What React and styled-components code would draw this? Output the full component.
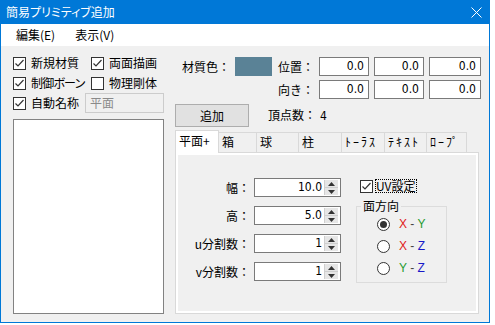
import React from 'react';
import styled, { createGlobalStyle } from 'styled-components';

const GlobalStyle = createGlobalStyle`
  html, body {
    margin: 0;
    padding: 0;
    background: #fff;
  }
  body {
    font-family: "Noto Sans CJK JP", "Noto Sans", sans-serif;
    font-size: 12px;
    color: #000;
  }
`;

const NUM_FONT = `"Liberation Sans Narrow", "DejaVu Sans Condensed", "Liberation Sans", sans-serif`;

const Window = styled.div`
  width: 490px;
  height: 323px;
  box-sizing: border-box;
  border: 1px solid #0078d7;
  border-top: none;
  background: #f0f0f0;
  display: flex;
  flex-direction: column;
`;

const TitleBar = styled.div`
  height: 24px;
  flex: none;
  background: #0078d7;
  color: #fff;
  display: flex;
  align-items: center;
  justify-content: space-between;
  padding: 0 7px 0 5px;
  line-height: 16px;
  font-feature-settings: "palt";
`;

const MenuBar = styled.div`
  height: 22px;
  flex: none;
  background: #fff;
  display: flex;
  align-items: center;
  padding-left: 5px;
`;

const MenuItem = styled.span`
  padding: 0 10px;
  line-height: 16px;
`;

const Body = styled.div`
  flex: 1;
  display: flex;
  gap: 11px;
  padding: 7px 0 0 12px;
`;

const LeftCol = styled.div`
  width: 151px;
  display: flex;
  flex-direction: column;
`;

const CheckGrid = styled.div`
  display: grid;
  grid-template-columns: 78px auto;
  grid-auto-rows: 20px;
  align-items: center;
`;

const CheckItem = styled.label`
  display: flex;
  align-items: center;
  gap: 5px;
  line-height: 16px;
  white-space: nowrap;
  font-feature-settings: "palt";
  letter-spacing: ${({ tight }) => (tight ? '-0.8px' : '0')};
`;

const NameRow = styled.div`
  height: 20px;
  display: flex;
  align-items: center;
  justify-content: space-between;
`;

const NameInput = styled.div`
  width: 79px;
  height: 20px;
  box-sizing: border-box;
  border: 1px solid #cccccc;
  background: #f0f0f0;
  color: #8a8a8a;
  padding-left: 4px;
  line-height: 17px;
`;

const ListBox = styled.div`
  margin-top: 6px;
  height: 195px;
  box-sizing: border-box;
  border: 1px solid #828282;
  background: #fff;
`;

const RightCol = styled.div`
  width: 305px;
  display: flex;
  flex-direction: column;
  padding-top: 4px;
`;

const TopGrid = styled.div`
  display: grid;
  grid-template-columns: 55px 37px 37px 50px 50px 52px;
  grid-auto-rows: 19px;
  column-gap: 5px;
  row-gap: 4px;
  align-items: center;
`;

const Label = styled.span`
  text-align: right;
  white-space: nowrap;
  line-height: 16px;
  grid-column: ${({ col }) => col || 'auto'};
`;

const Swatch = styled.div`
  height: 19px;
  background: #5a8296;
`;

const Field = styled.div`
  height: 19px;
  box-sizing: border-box;
  border: 1px solid #7a7a7a;
  background: #fff;
  text-align: right;
  padding-right: 4px;
  font-family: ${NUM_FONT};
  line-height: 17px;
`;

const ActionRow = styled.div`
  margin-top: 5px;
  display: flex;
  align-items: center;
  gap: 19px;
`;

const Button = styled.div`
  width: 74px;
  height: 23px;
  box-sizing: border-box;
  border: 1px solid #adadad;
  background: #e1e1e1;
  display: flex;
  align-items: center;
  justify-content: center;
`;

const Count = styled.span`
  line-height: 16px;
  b {
    font-weight: normal;
    font-family: ${NUM_FONT};
    margin-left: 4px;
  }
`;

const TabList = styled.div`
  margin-top: 3px;
  height: 22px;
  display: flex;
  align-items: flex-end;
`;

const Tab = styled.div`
  width: ${({ w }) => w}px;
  height: ${({ active }) => (active ? 23 : 20)}px;
  margin-bottom: ${({ active }) => (active ? -1 : 0)}px;
  box-sizing: border-box;
  border: 1px solid #d9d9d9;
  border-bottom: none;
  border-left-width: ${({ first }) => (first ? 1 : 0)}px;
  background: ${({ active }) => (active ? '#fff' : '#f0f0f0')};
  position: relative;
  z-index: ${({ active }) => (active ? 1 : 0)};
  padding-left: 3px;
  line-height: ${({ active }) => (active ? 19 : 17)}px;
  letter-spacing: ${({ kana }) => (kana ? '2px' : '0')};
  white-space: nowrap;
`;

const Panel = styled.div`
  width: 304px;
  height: 162px;
  box-sizing: border-box;
  border: 1px solid #d9d9d9;
  background: #fff;
  padding: 2px;
`;

const TabPage = styled.div`
  height: 100%;
  background: #f0f0f0;
  display: flex;
  align-items: flex-start;
  padding-top: 23px;
  box-sizing: border-box;
`;

const FormGrid = styled.div`
  display: grid;
  grid-template-columns: 72px 87px;
  grid-auto-rows: 19px;
  column-gap: 4px;
  row-gap: 9px;
  align-items: center;
`;

const SpinBox = styled.div`
  height: 19px;
  box-sizing: border-box;
  border: 1px solid #7a7a7a;
  background: #fff;
  display: flex;
`;

const SpinValue = styled.span`
  flex: 1;
  text-align: right;
  padding-right: 2px;
  font-family: ${NUM_FONT};
  line-height: 17px;
`;

const SpinButtons = styled.div`
  width: 13px;
  margin: 1px 2px 1px 0;
  display: flex;
  flex-direction: column;
  border-left: 1px solid #cfcfcf;
`;

const SpinHalf = styled.div`
  flex: 1;
  background: #e6e6e6;
  display: flex;
  align-items: center;
  justify-content: center;
  & + & {
    border-top: 1px solid #cfcfcf;
  }
`;

const UvCol = styled.div`
  margin-left: 15px;
  width: 91px;
  display: flex;
  flex-direction: column;
`;

const UvRow = styled.label`
  height: 14px;
  margin-top: 1px;
  padding-left: 4px;
  display: flex;
  align-items: center;
  gap: 2px;
  line-height: 14px;
`;

const FocusText = styled.span`
  outline: 1px dotted #000;
  outline-offset: -1px;
  padding: 0 1px;
`;

const Group = styled.fieldset`
  margin: 6px 0 0;
  padding: 0 0 3px 20px;
  border: 1px solid #dcdcdc;
  min-width: 0;
`;

const Legend = styled.legend`
  padding: 0 2px;
  margin-left: -16px;
  line-height: 14px;
  font-size: 12px;
`;

const RadioRow = styled.label`
  height: 22px;
  display: flex;
  align-items: center;
  gap: 9px;
`;

const Axes = styled.span`
  font-family: "Liberation Sans", sans-serif;
  font-size: 12px;
  color: #444;
  white-space: pre;
`;

const Axis = styled.span`
  color: ${({ c }) => ({ X: '#e0201a', Y: '#1f9a2e', Z: '#1818c8' }[c])};
`;

const CheckBox = ({ checked }) => (
  <svg width="13" height="13" viewBox="0 0 13 13" style={{ flex: 'none' }}>
    <rect x="0.5" y="0.5" width="12" height="12" fill="#fff" stroke="#333" />
    {checked && (
      <polyline points="2.5,6.5 5,9 10.5,3" fill="none" stroke="#333" strokeWidth="1.2" />
    )}
  </svg>
);

const Radio = ({ checked }) => (
  <svg width="13" height="13" viewBox="0 0 13 13" style={{ flex: 'none' }}>
    <circle cx="6.5" cy="6.5" r="6" fill="#fff" stroke="#333" />
    {checked && <circle cx="6.5" cy="6.5" r="3.5" fill="#333" />}
  </svg>
);

const Spin = ({ value }) => (
  <SpinBox>
    <SpinValue>{value}</SpinValue>
    <SpinButtons>
      <SpinHalf>
        <svg width="7" height="4" viewBox="0 0 7 4"><polygon points="0,4 3.5,0 7,4" fill="#333" /></svg>
      </SpinHalf>
      <SpinHalf>
        <svg width="7" height="4" viewBox="0 0 7 4"><polygon points="0,0 3.5,4 7,0" fill="#333" /></svg>
      </SpinHalf>
    </SpinButtons>
  </SpinBox>
);

const AxisPair = ({ a, b }) => (
  <Axes>
    <Axis c={a}>{a}</Axis>{' - '}<Axis c={b}>{b}</Axis>
  </Axes>
);

// half-width katakana, as the original tab captions use
const tabs = [
  { name: '平面+', w: 44 },
  { name: '箱', w: 38 },
  { name: '球', w: 42 },
  { name: '柱', w: 43 },
  { name: 'ﾄｰﾗｽ', w: 43, kana: true },
  { name: 'ﾃｷｽﾄ', w: 42, kana: true },
  { name: 'ﾛｰﾌﾟ', w: 40, kana: true },
];

const sizes = [
  { label: '幅：', value: '10.0' },
  { label: '高：', value: '5.0' },
  { label: 'u分割数：', value: '1' },
  { label: 'v分割数：', value: '1' },
];

export default function App() {
  return (
    <>
      <GlobalStyle />
      <Window>
        <TitleBar>
          <span>簡易プリミティブ追加</span>
          <svg width="11" height="11" viewBox="0 0 11 11">
            <path d="M0.5 0.5 L10.5 10.5 M10.5 0.5 L0.5 10.5" stroke="#fff" strokeWidth="1" />
          </svg>
        </TitleBar>
        <MenuBar>
          <MenuItem>編集(E)</MenuItem>
          <MenuItem>表示(V)</MenuItem>
        </MenuBar>
        <Body>
          <LeftCol>
            <CheckGrid>
              <CheckItem><CheckBox checked />新規材質</CheckItem>
              <CheckItem><CheckBox checked />両面描画</CheckItem>
              <CheckItem tight><CheckBox checked />制御ボーン</CheckItem>
              <CheckItem><CheckBox />物理剛体</CheckItem>
            </CheckGrid>
            <NameRow>
              <CheckItem><CheckBox checked />自動名称</CheckItem>
              <NameInput>平面</NameInput>
            </NameRow>
            <ListBox />
          </LeftCol>
          <RightCol>
            <TopGrid>
              <Label>材質色：</Label>
              <Swatch />
              <Label>位置：</Label>
              <Field>0.0</Field>
              <Field>0.0</Field>
              <Field>0.0</Field>
              <Label col={3}>向き：</Label>
              <Field>0.0</Field>
              <Field>0.0</Field>
              <Field>0.0</Field>
            </TopGrid>
            <ActionRow>
              <Button>追加</Button>
              <Count>頂点数：<b>4</b></Count>
            </ActionRow>
            <TabList>
              {tabs.map((t, i) => (
                <Tab key={t.name} w={t.w} kana={t.kana} first={i === 0} active={i === 0}>{t.name}</Tab>
              ))}
            </TabList>
            <Panel>
              <TabPage>
                <FormGrid>
                  {sizes.map((s) => (
                    <React.Fragment key={s.label}>
                      <Label>{s.label}</Label>
                      <Spin value={s.value} />
                    </React.Fragment>
                  ))}
                </FormGrid>
                <UvCol>
                  <UvRow><CheckBox checked /><FocusText>UV設定</FocusText></UvRow>
                  <Group>
                    <Legend>面方向</Legend>
                    <RadioRow><Radio checked /><AxisPair a="X" b="Y" /></RadioRow>
                    <RadioRow><Radio /><AxisPair a="X" b="Z" /></RadioRow>
                    <RadioRow><Radio /><AxisPair a="Y" b="Z" /></RadioRow>
                  </Group>
                </UvCol>
              </TabPage>
            </Panel>
          </RightCol>
        </Body>
      </Window>
    </>
  );
}
